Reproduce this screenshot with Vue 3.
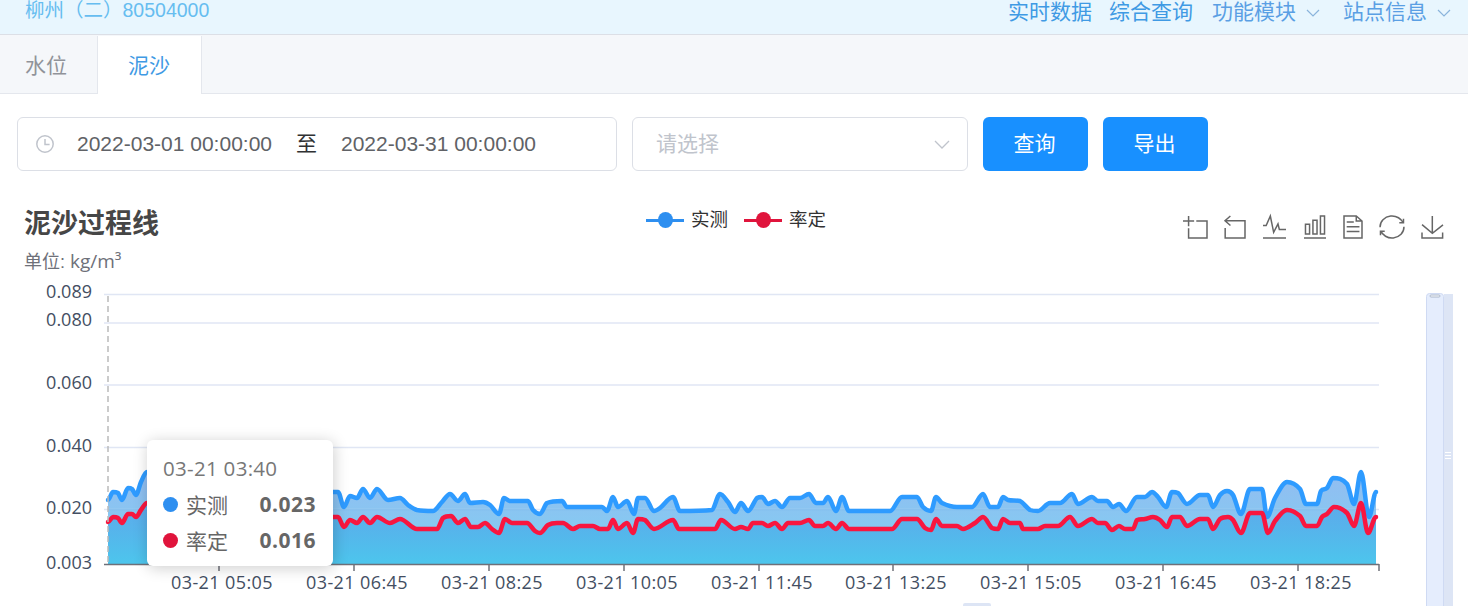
<template>
  <div class="page">
    <header class="top-bar">
      <div class="station">柳州（二）80504000</div>
      <nav class="nav">
        <a>实时数据</a>
        <a>综合查询</a>
        <a class="drop">功能模块
          <svg viewBox="0 0 14 8"><path d="M1 1l6 6 6-6" /></svg>
        </a>
        <a class="drop last">站点信息
          <svg viewBox="0 0 14 8"><path d="M1 1l6 6 6-6" /></svg>
        </a>
      </nav>
    </header>

    <div class="tabs">
      <div class="tab">水位</div>
      <div class="tab active">泥沙</div>
    </div>

    <div class="filters">
      <div class="range">
        <svg class="clock" viewBox="0 0 20 20">
          <circle cx="10" cy="10" r="8.2" />
          <path d="M10 5v5.4h4.6" />
        </svg>
        <span>2022-03-01 00:00:00</span>
        <span class="to">至</span>
        <span>2022-03-31 00:00:00</span>
      </div>
      <div class="select">
        <span class="placeholder">请选择</span>
        <svg viewBox="0 0 16 9"><path d="M1 1l7 7 7-7" /></svg>
      </div>
      <button class="btn">查询</button>
      <button class="btn">导出</button>
    </div>

    <div class="chart-head">
      <div class="titles">
        <h2>泥沙过程线</h2>
        <p>单位: <span class="unit">kg/m³</span></p>
      </div>
      <div class="legend">
        <div class="legend-item blue"><i></i>实测</div>
        <div class="legend-item red"><i></i>率定</div>
      </div>
      <div class="tools">
        <svg
          v-for="icon in toolIcons"
          :key="icon.d"
          :viewBox="icon.box"
          :style="{ width: icon.w + 'px' }"
          preserveAspectRatio="none"
        >
          <path :d="icon.d" vector-effect="non-scaling-stroke" />
        </svg>
      </div>
    </div>

    <div class="chart">
      <svg class="plot" width="1468" height="326" viewBox="0 280 1468 326">
        <defs>
          <linearGradient id="fillBlue" x1="0" y1="0" x2="0" y2="1">
            <stop offset="0" stop-color="#3a86e6" stop-opacity="0.55" />
            <stop offset="1" stop-color="#47c4ec" stop-opacity="0.7" />
          </linearGradient>
          <linearGradient id="fillRed" x1="0" y1="0" x2="0" y2="1">
            <stop offset="0" stop-color="#4b9ee8" stop-opacity="0.7" />
            <stop offset="1" stop-color="#47c4ec" stop-opacity="0.9" />
          </linearGradient>
        </defs>

        <line v-for="g in grid" :key="g.label" x1="104" x2="1379" :y1="g.y" :y2="g.y" class="grid-line" />
        <text v-for="l in yLabels" :key="'l' + l.label" x="92" :y="l.y" class="y-label">{{ l.label }}</text>

        <path :d="blueArea" fill="url(#fillBlue)" />
        <path :d="redArea" fill="url(#fillRed)" />
        <line x1="108" x2="1376" y1="509" y2="509" class="grid-over" />
        <path :d="blueLine" class="series" stroke="#2e9bff" />
        <path :d="redLine" class="series" stroke="#f8163f" />

        <line x1="108" x2="108" y1="296" y2="564" class="pointer" />
        <line x1="104" x2="1379" y1="564.5" y2="564.5" class="axis" />
        <line v-for="t in ticks" :key="t.x" :x1="t.x" :x2="t.x" y1="564" y2="571" class="axis" />
        <text v-for="t in ticks.filter(t => t.label)" :key="t.label" :x="t.x + 3" y="589" class="x-label">{{ t.label }}</text>

        <!-- vertical data zoom -->
        <rect x="1426.5" y="293.5" width="17" height="320" rx="3" class="zoom-fill" />
        <rect x="1444" y="294" width="9" height="312" class="zoom-back" />
        <rect x="1430" y="295" width="10" height="2" rx="1" class="zoom-cap" />
        <path d="M1445 452.5h6M1445 455.5h6M1445 458.5h6" class="zoom-grip" />
        <rect x="963" y="603" width="28" height="6" rx="2" class="zoom-back" />
      </svg>

      <div class="tooltip">
        <div class="tip-time">03-21 03:40</div>
        <div class="tip-row first"><i class="dot" style="background: #2e8ff0"></i><span>实测</span><b>0.023</b></div>
        <div class="tip-row"><i class="dot" style="background: #e0143c"></i><span>率定</span><b>0.016</b></div>
      </div>
    </div>
  </div>
</template>

<script setup>
const grid = [
  { label: '0.089', y: 294.5 },
  { label: '0.080', y: 323 },
  { label: '0.060', y: 385 },
  { label: '0.040', y: 447.5 },
  { label: '0.020', y: 509.5 }
];

const yLabels = [
  { label: '0.089', y: 298 },
  { label: '0.080', y: 326 },
  { label: '0.060', y: 389 },
  { label: '0.040', y: 452 },
  { label: '0.020', y: 514 },
  { label: '0.003', y: 569 }
];

const ticks = [
  { x: 219, label: '03-21 05:05' },
  { x: 354, label: '03-21 06:45' },
  { x: 489, label: '03-21 08:25' },
  { x: 624, label: '03-21 10:05' },
  { x: 759, label: '03-21 11:45' },
  { x: 893, label: '03-21 13:25' },
  { x: 1028, label: '03-21 15:05' },
  { x: 1163, label: '03-21 16:45' },
  { x: 1298, label: '03-21 18:25' },
  { x: 1379, label: '' }
];

// 工具栏图标，宽度按截图量的
const toolIcons = [
  { w: 24, box: '0 0 58 58', d: 'M0,13.5h26.9 M13.5,26.9V0 M32.1,13.5H58V58H13.5 V32.1' },
  { w: 20, box: '9.9 1.4 45 56.6', d: 'M22,1.4L9.9,13.5l12.3,12.3 M10.3,13.5H54.9v44.6 H10.3v-26' },
  { w: 23, box: '4.1 6.9 51.4 51.1', d: 'M4.1,28.9h7.1l9.3-22l7.4,38l9.7-19.7l3,12.8h14.9M4.1,58h51.4' },
  { w: 22, box: '3.1 2 53.7 56', d: 'M6.7,22.9h10V48h-10V22.9zM24.9,13h10v35h-10V13zM43.2,2h10v46h-10V2zM3.1,58h53.7' },
  { w: 18, box: '11.5 2 39.5 56', d: 'M17.5,17.3H33 M45.4,29.5h-28 M11.5,2v56H51V14.8L38.4,2H11.5z M38.4,2.2v12.7H51 M45.4,41.7h-28' },
  { w: 24, box: '2 1.9 56 56.2', d: 'M47,18.9h9.8V8.7 M56.3,20.1C52.1,9,40.5,0.6,26.8,2.1C12.6,3.7,1.6,16.2,2.1,30.6 M13,41.1H3.1v10.2 M3.7,39.9c4.2,11.1,15.8,19.5,29.5,18c14.2-1.6,25.2-14.1,24.7-28.5' },
  { w: 21, box: '4.6 0 50.1 58', d: 'M4.7,22.9L29.3,45.5L54.7,23.4M4.6,43.6L4.6,58L53.8,58L53.8,43.6M29.2,45.1L29.2,0' }
];

// 从截图读出来的折线点 [x, y]
const bluePts = [
  [108,500],[113,492],[118,493],[122,500],[128,488],[132,489],[136,495],[141,482],[147,472],[333,492],[338,492],[344,507],[350,496],[357,498],[363,489],[370,498],[377,489],[388,500],[400,498],
  [408,505],[417,510],[433,511],[442,502],[450,494],[458,501],[465,494],[470,503],[483,502],[490,505],[499,514],[504,498],[510,501],[528,501],[533,510],[540,514],[547,503],[562,501],[567,507],[602,507],[607,511],[613,497],[618,507],[627,501],[634,514],[638,498],[645,498],[654,511],[660,508],[673,497],[680,511],[712,510],[720,494],[728,502],[735,512],[741,503],[748,511],[757,498],[762,497],[768,504],[775,501],[782,507],[790,498],[800,498],
  [809,494],[816,503],[823,503],[828,497],[836,511],[842,497],[849,511],[890,511],[902,497],[917,497],[923,507],[931,511],[936,497],[942,503],[957,507],[972,507],[983,494],[990,507],[998,507],[1003,497],[1008,500],[1020,501],[1030,510],[1038,511],[1050,503],[1060,503],[1072,494],[1078,504],[1092,497],[1098,501],[1107,501],[1113,507],[1119,504],[1126,511],[1137,497],[1145,497],[1152,492],[1158,497],[1166,507],[1172,492],[1178,493],[1187,504],[1200,495],
  [1208,495],[1213,507],[1220,495],[1227,491],[1233,495],[1241,514],[1250,489],[1262,489],[1267,517],[1275,498],[1287,482],[1300,489],[1306,504],[1317,504],[1321,491],[1327,488],[1333,478],[1347,484],[1354,504],[1361,472],[1369,517],[1376,492]
];

const redPts = [
  [108,522],[113,517],[118,518],[122,523],[128,514],[132,514],[136,517],[141,510],[147,503],[333,517],[338,517],[344,527],[350,520],[357,523],[363,517],[370,523],[377,517],[390,523],[400,519],
  [417,529],[437,529],[443,518],[451,516],[458,523],[465,519],[471,527],[478,527],[485,523],[492,529],[499,533],[505,519],[512,523],[527,523],[535,531],[540,533],[548,525],[557,523],[563,523],[573,529],[580,526],[593,526],[600,529],[608,529],[613,520],[618,529],[627,523],[633,533],[638,519],[645,520],[654,529],[673,520],[679,529],[715,529],[721,520],[735,529],[741,527],[748,529],[753,523],[762,523],[768,526],[775,523],[782,529],[788,523],[800,523],
  [809,520],[815,526],[823,526],[828,523],[836,529],[842,523],[849,529],[892,529],[902,519],[917,519],[925,528],[931,530],[936,519],[942,526],[957,526],[963,529],[975,523],[983,517],[992,528],[998,529],[1003,519],[1010,523],[1020,523],[1023,529],[1038,529],[1045,526],[1058,526],[1070,517],[1078,526],[1092,519],[1098,523],[1105,523],[1112,530],[1119,526],[1125,529],[1133,529],[1137,520],[1145,519],[1153,517],[1160,520],[1167,527],[1172,517],[1180,517],[1187,526],[1200,519],
  [1208,519],[1213,529],[1220,519],[1228,517],[1233,520],[1241,533],[1250,513],[1262,513],[1268,533],[1275,521],[1287,510],[1300,516],[1306,526],[1317,526],[1322,517],[1327,514],[1334,507],[1347,513],[1354,526],[1361,503],[1368,533],[1376,517]
];

// 单调平滑：极值点切线为 0，不会冲过平台段
const tangent = (a, b, c) => {
  if (!a || !c) return 0;
  if ((b[1] - a[1]) * (c[1] - b[1]) <= 0) return 0;
  return (c[1] - a[1]) / (c[0] - a[0]);
};

const smooth = (pts) => {
  let d = `M${pts[0][0]},${pts[0][1]}`;
  for (let i = 0; i < pts.length - 1; i++) {
    const p1 = pts[i];
    const p2 = pts[i + 1];
    const dx = (p2[0] - p1[0]) / 3;
    const lo = Math.min(p1[1], p2[1]);
    const hi = Math.max(p1[1], p2[1]);
    const c1y = Math.min(hi, Math.max(lo, p1[1] + tangent(pts[i - 1], p1, p2) * dx));
    const c2y = Math.min(hi, Math.max(lo, p2[1] - tangent(p1, p2, pts[i + 2]) * dx));
    d += `C${(p1[0] + dx).toFixed(1)},${c1y.toFixed(1)} ${(p2[0] - dx).toFixed(1)},${c2y.toFixed(1)} ${p2[0]},${p2[1]}`;
  }
  return d;
};

const blueLine = smooth(bluePts);
const redLine = smooth(redPts);
const blueArea = `${blueLine}L1376,564L108,564Z`;
const redArea = `${redLine}L1376,564L108,564Z`;
</script>

<style>
html,
body {
  margin: 0;
  overflow: hidden;
  background: #fff;
}
</style>

<style scoped>
.page {
  width: 1468px;
  height: 606px;
  overflow: hidden;
  font-family: "Liberation Sans", "Noto Sans CJK SC", sans-serif;
  color: #606266;
}

.top-bar {
  height: 34px;
  display: flex;
  justify-content: space-between;
  padding: 0 17px 0 25px;
  background: #e8f6fe;
  border-bottom: 1px solid #dcdfe6;
  line-height: 22px;
  font-size: 21px;
  box-sizing: content-box;
}

.station {
  color: #66bdf0;
  font-size: 19.5px;
  line-height: 20px;
}

.nav {
  display: flex;
  gap: 17px;
  color: #3f9ae4;
}

.nav a {
  display: flex;
  align-items: center;
  height: 24px;
}

.nav .drop {
  margin-left: 2px;
  gap: 10px;
  color: #5a9fe4;
}

.nav .drop.last {
  margin-left: 6px;
}

.nav svg {
  width: 14px;
  height: 8px;
  margin-top: 2px;
}

.nav svg path {
  fill: none;
  stroke: #8ab4dc;
  stroke-width: 1.2;
}

.tabs {
  display: flex;
  height: 58px;
  background: #f5f7fa;
  border-bottom: 1px solid #e4e7ed;
}

.tab {
  padding: 0 30px 0 25px;
  line-height: 62px;
  font-size: 21px;
  color: #909399;
}

.tab.active {
  height: 58px;
  margin-top: 1px;
  padding: 0 31px 0 30px;
  line-height: 60px;
  background: #fff;
  color: #3f9ae4;
  border-left: 1px solid #e4e7ed;
  border-right: 1px solid #e4e7ed;
}

.filters {
  display: flex;
  gap: 15px;
  padding: 23px 0 0 17px;
  height: 54px;
}

.range,
.select {
  box-sizing: border-box;
  height: 54px;
  display: flex;
  align-items: center;
  border: 1px solid #dcdfe6;
  border-radius: 6px;
  font-size: 21px;
}

.range {
  width: 600px;
  padding-left: 17px;
}

.clock {
  width: 20px;
  height: 20px;
  margin-right: 22px;
}

.clock circle,
.clock path {
  fill: none;
  stroke: #c0c4cc;
  stroke-width: 1.5;
}

.to {
  margin: 0 24px;
  padding-bottom: 5px;
  color: #303133;
}

.select {
  width: 336px;
  padding: 0 17px 0 23px;
  justify-content: space-between;
  color: #c0c4cc;
}

.placeholder {
  padding-bottom: 5px;
}

.select svg {
  width: 16px;
  height: 9px;
}

.select path {
  fill: none;
  stroke: #c0c4cc;
  stroke-width: 1.3;
}

.btn {
  width: 105px;
  height: 54px;
  padding: 0 2px 5px 0;
  border: 0;
  border-radius: 6px;
  background: #1890ff;
  color: #fff;
  font: inherit;
  font-size: 21px;
}

.chart-head {
  position: relative;
  display: flex;
  height: 109px;
}

.titles {
  padding: 35px 0 0 24px;
  width: 622px;
}

.titles h2 {
  margin: 0;
  font-size: 27px;
  line-height: 36px;
  font-weight: 700;
  color: #464646;
}

.titles p {
  margin: 8px 0 0;
  font-size: 18px;
  line-height: 22px;
  color: #6e7079;
}

.unit {
  font-family: "Open Sans", sans-serif;
  font-size: 19px;
}

.legend {
  display: flex;
  gap: 16px;
  padding-top: 37px;
  height: 24px;
  font-size: 18.5px;
  line-height: 24px;
  color: #333;
}

.legend-item {
  display: flex;
  align-items: center;
  gap: 7px;
}

.legend-item i {
  position: relative;
  display: block;
  width: 38px;
  height: 3px;
}

.legend-item i::after {
  content: "";
  position: absolute;
  left: 12px;
  top: -6.5px;
  width: 15px;
  height: 16px;
  border-radius: 50%;
  background: inherit;
}

.legend-item.blue i {
  background: #2e8ff0;
}

.legend-item.red i {
  background: #e0143c;
}

.tools {
  position: absolute;
  left: 1183px;
  top: 45px;
  display: flex;
  gap: 18px;
}

.tools svg {
  height: 22px;
  overflow: visible;
}

.tools path {
  fill: none;
  stroke: #666;
  stroke-width: 1.5;
}

.chart {
  position: relative;
  height: 326px;
}

.plot {
  display: block;
}

.grid-line {
  stroke: #e0e6f4;
  stroke-width: 1.5;
}

.grid-over {
  stroke: #fff;
  stroke-opacity: 0.12;
  stroke-width: 1.5;
}

.y-label,
.x-label {
  font-family: "Open Sans", sans-serif;
  font-size: 18px;
  fill: #434e62;
}

.y-label {
  text-anchor: end;
}

.x-label {
  text-anchor: middle;
  letter-spacing: 0.4px;
}

.series {
  fill: none;
  stroke-width: 4.5;
  stroke-linejoin: round;
  stroke-linecap: round;
}

.pointer {
  stroke: #bbb;
  stroke-width: 1.5;
  stroke-dasharray: 6 4;
}

.axis {
  stroke: #6e7079;
  stroke-width: 1.5;
}

.zoom-fill {
  fill: #e5edfd;
  stroke: #cfdaf3;
}

.zoom-back {
  fill: #dde5f5;
}

.zoom-cap {
  fill: #fff;
  stroke: #aab6c9;
}

.zoom-grip {
  stroke: #fff;
  stroke-width: 1.2;
}

.tooltip {
  position: absolute;
  left: 147px;
  top: 160px;
  box-sizing: border-box;
  width: 186px;
  height: 126px;
  padding: 14px 17px 0 16px;
  background: #fff;
  border-radius: 6px;
  box-shadow: 1px 2px 15px rgba(0, 0, 0, 0.2);
  font-size: 21px;
  color: #666;
}

.tip-time {
  font-family: "Open Sans", sans-serif;
  font-size: 20.5px;
  letter-spacing: 0.3px;
  line-height: 28px;
  color: #777;
}

.tip-row {
  display: flex;
  align-items: center;
  height: 36px;
}

.tip-row.first {
  margin-top: 4px;
}

.tip-row .dot {
  width: 15px;
  height: 15px;
  border-radius: 50%;
  margin-right: 8px;
}

.tip-row b {
  margin-left: auto;
  font-family: "Open Sans", sans-serif;
  letter-spacing: 0.5px;
  color: #666;
}
</style>
